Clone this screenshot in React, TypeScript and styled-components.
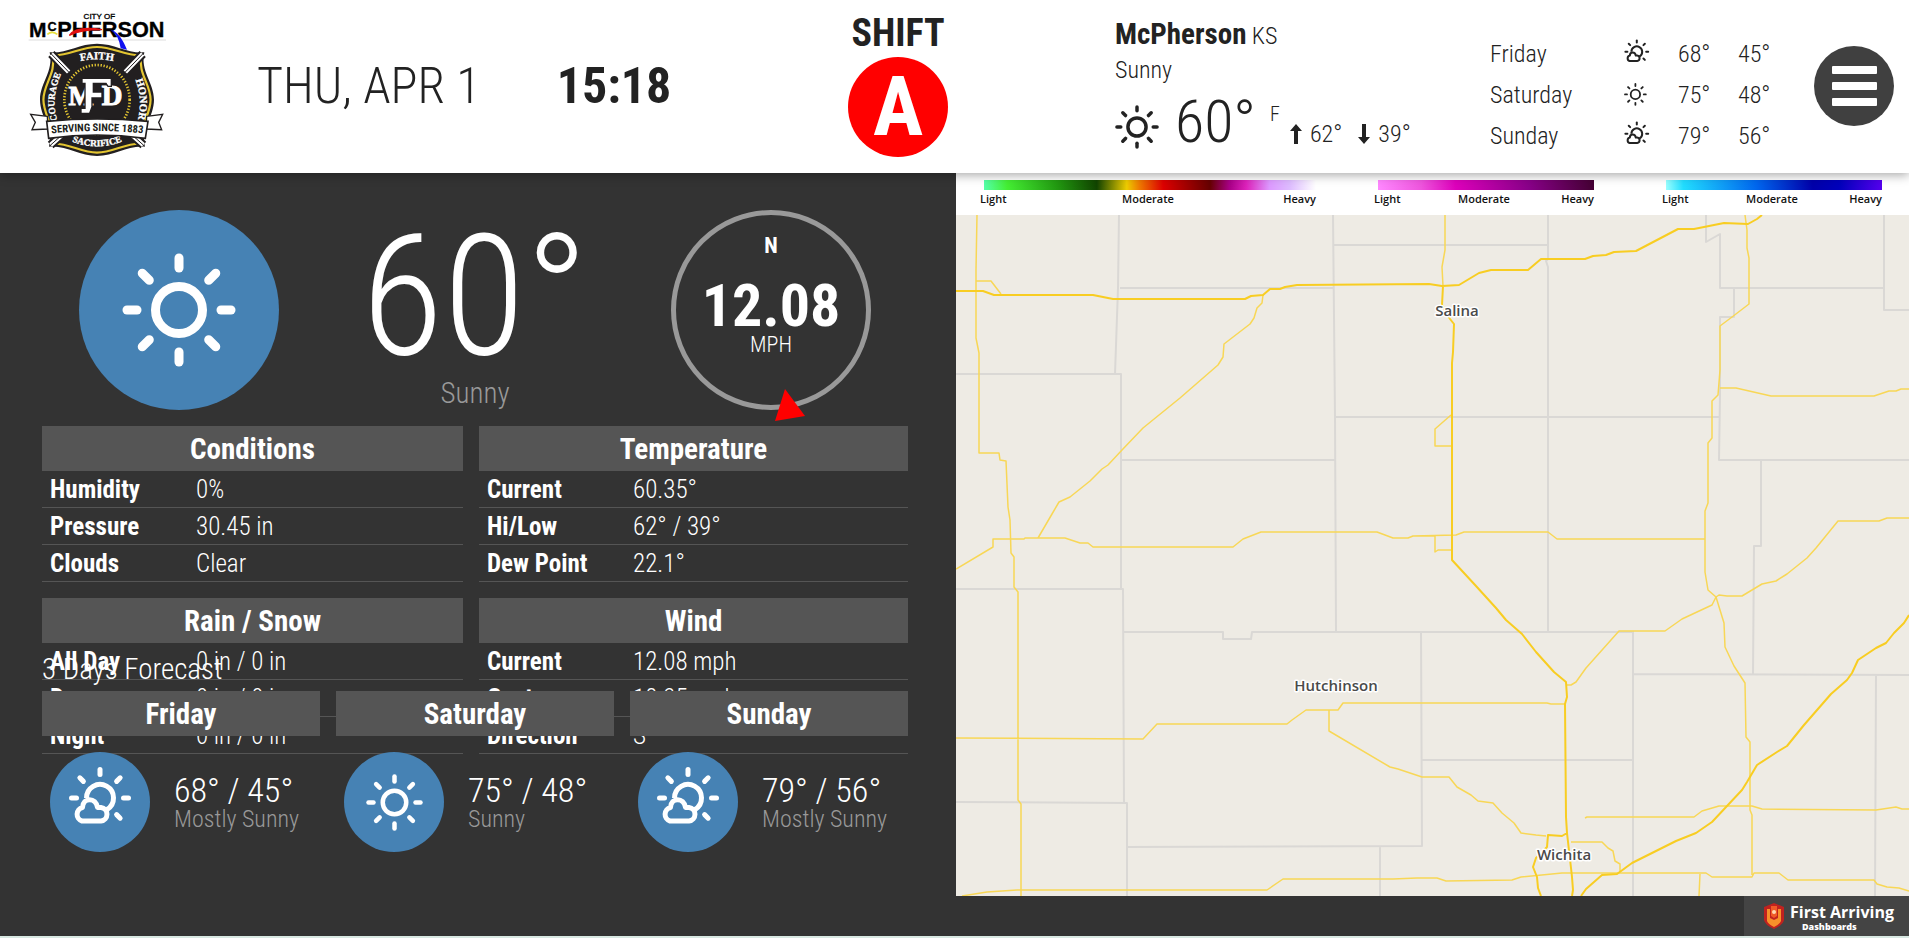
import styled, { createGlobalStyle, css } from 'styled-components'

const GlobalStyle = createGlobalStyle`
  * {
    box-sizing: border-box;
  }

  body {
    margin: 0;
    color: #222;
    background: #333;
    font-family: 'Roboto Condensed', Roboto, sans-serif;
    font-weight: 300;
  }

  b {
    font-weight: bold;
  }
`

const Page = styled.div`
  display: flex;
  flex-direction: column;
  min-height: 100vh;
  border-bottom: 2px solid #d8e8e2;
`

const Header = styled.header`
  position: relative;
  z-index: 2;
  display: grid;
  grid-template-columns: 229fr 541fr 200fr 492fr 324fr 95fr;
  height: 173px;
  padding-left: 28px;
  background: #fff;
  box-shadow: 0 2px 10px rgba(0, 0, 0, 0.35);
`

const LogoBox = styled.div`
  padding-top: 13px;
`

const DateTime = styled.div`
  display: flex;
  align-items: center;
  gap: 76px;
  padding-bottom: 2px;
  font-size: 50px;
  line-height: 60px;
  white-space: nowrap;
`

const Shift = styled.div`
  display: flex;
  flex-direction: column;
  align-items: center;
  padding-top: 13px;
  font-weight: bold;
`

const ShiftTitle = styled.div`
  font-size: 38px;
  line-height: 40px;
`

const ShiftBadge = styled.div`
  width: 100px;
  height: 100px;
  margin-top: 4px;
  border-radius: 50%;
  color: #fff;
  background: #f00;
  font-size: 84px;
  line-height: 100px;
  text-align: center;
`

const HeaderWeather = styled.section`
  padding: 16px 0 0 117px;
  font-size: 24px;
  line-height: 36px;
  white-space: nowrap;
`

const HeaderCity = styled.div`
  height: 36px;

  b {
    font-size: 29px;
  }
`

const HeaderNow = styled.div`
  display: flex;
  align-items: flex-start;
`

const HeaderNowIcon = styled.div`
  display: flex;
  width: 60px;
  padding-top: 17px;
`

const HeaderTemp = styled.div`
  font-size: 60px;
  line-height: 68px;
`

const Unit = styled.div`
  margin: 16px 10px 0 14px;
  font-size: 20px;
  line-height: 20px;
`

const HiLow = styled.div`
  display: flex;
  align-items: center;
  gap: 8px;
  padding: 30px 16px 0 0;
  line-height: 32px;
`

const DayTable = styled.table`
  height: 123px;
  margin-top: 33px;
  border-collapse: collapse;
  font-size: 24px;

  th,
  td {
    height: 41px;
    padding: 0;
    font-weight: 300;
    text-align: left;
  }

  th {
    width: 134px;
  }

  td {
    width: 60px;
  }

  td:nth-child(2) {
    width: 54px;
  }

  svg {
    display: block;
  }
`

const MenuButton = styled.button`
  display: flex;
  align-items: center;
  justify-content: center;
  width: 80px;
  height: 80px;
  margin-top: 46px;
  padding: 0;
  border: 0;
  border-radius: 50%;
  background: #404040;
  cursor: pointer;
`

const Main = styled.main`
  flex: 1;
  display: grid;
  grid-template-columns: 956fr 953fr;
`

const WeatherPanel = styled.section`
  position: relative;
  padding: 37px 48px 0 42px;
  color: #fff;
  background: #333;
`

const CurrentRow = styled.div`
  display: flex;
  justify-content: space-between;
  padding: 0 37px;
`

const Round = styled.div<{ $size: number }>`
  display: flex;
  flex: none;
  align-items: center;
  justify-content: center;
  width: ${(p) => p.$size}px;
  height: ${(p) => p.$size}px;
  border-radius: 50%;
  background: #4682b4;
`

const CurrentTemp = styled.div`
  height: 168px;
  font-size: 168px;
  line-height: 174px;
`

const CurrentText = styled.div`
  color: #999;
  font-size: 29px;
  line-height: 30px;
  text-align: center;
`

const Compass = styled.div`
  position: relative;
  width: 200px;
  height: 200px;
  padding-top: 19px;
  border: 5px solid #999;
  border-radius: 50%;
  font-size: 22px;
  line-height: 24px;
  text-align: center;
`

const Speed = styled.div`
  height: 57px;
  margin-top: 18px;
  font-size: 60px;
  font-weight: bold;
  line-height: 60px;
`

const Needle = styled.svg`
  position: absolute;
  left: 99px;
  top: 174px;
`

const TableGrid = styled.div`
  display: grid;
  grid-template-columns: 421fr 429fr;
  gap: 16px;
  margin-top: 16px;
`

const barStyle = css`
  height: 45px;
  background: #555;
  font-size: 29px;
  font-weight: bold;
  text-align: center;
`

const InfoTable = styled.table`
  width: 100%;
  table-layout: fixed;
  border-spacing: 0;
  font-size: 25px;

  col:first-child {
    width: 146px;
  }

  thead th {
    ${barStyle}
    padding: 0;
  }

  tbody th,
  tbody td {
    height: 37px;
    padding: 2px 8px 0;
    border-bottom: 1px solid #555;
    line-height: 30px;
    text-align: left;
  }
`

// sits on top of the tables when the window is short
const Forecast = styled.section`
  position: absolute;
  right: 48px;
  bottom: 84px;
  left: 42px;
`

const ForecastTitle = styled.h2`
  margin: 0;
  font-size: 29px;
  font-weight: 300;
  line-height: 44px;
`

const ForecastGrid = styled.div`
  display: grid;
  grid-template-columns: 1fr 1fr 1fr;
  gap: 16px;
`

const ForecastDay = styled.h3`
  ${barStyle}
  margin: 0 0 16px;
  line-height: 46px;
`

const ForecastBody = styled.div`
  display: flex;
  align-items: center;
  gap: 24px;
  padding-left: 8px;
  white-space: nowrap;
`

const ForecastTemp = styled.div`
  font-size: 34px;
  line-height: 34px;
`

const ForecastText = styled.div`
  color: #999;
  font-size: 24px;
  line-height: 24px;
`

const MapPanel = styled.section`
  display: flex;
  flex-direction: column;
  min-width: 0;
`

const Legend = styled.div`
  display: grid;
  grid-template-columns: 394fr 288fr 247fr;
  height: 42px;
  padding: 7px 0 0 24px;
  color: #111;
  background: #fff;
  font: 600 11px/16px 'Open Sans', sans-serif;
`

const Scale = styled.div<{ $gap: number }>`
  padding-right: ${(p) => p.$gap}px;
`

const ScaleBar = styled.div<{ $colors: string }>`
  height: 10px;
  margin-left: 4px;
  background: linear-gradient(90deg, ${(p) => p.$colors});
`

const ScaleText = styled.div`
  display: grid;
  grid-template-columns: 1fr auto 1fr;
  margin-top: 1px;

  span:last-child {
    text-align: right;
  }
`

const MapArea = styled.div`
  flex: 1;
  min-height: 681px;
  overflow: hidden;
  background: #eeebe4;

  svg {
    display: block;
    width: 100%;
    height: 100%;
  }
`

const MapText = styled.text`
  fill: #4a4a4a;
  stroke: #fff;
  stroke-width: 3px;
  stroke-linejoin: round;
  paint-order: stroke;
  font: 600 15px 'Open Sans', sans-serif;
  text-anchor: middle;
`

const Footer = styled.footer`
  display: flex;
  justify-content: flex-end;
  height: 40px;
  background: #333;
`

const Brand = styled.div`
  display: flex;
  align-items: center;
  gap: 5px;
  width: 165px;
  padding-left: 19px;
  color: #fff;
  background: #444;
  font-family: 'Open Sans', sans-serif;
  white-space: nowrap;
`

const BrandName = styled.div`
  font-size: 16px;
  font-weight: bold;
  line-height: 22px;
`

const BrandSub = styled.div`
  padding-left: 12px;
  font-size: 9px;
  font-weight: 800;
  line-height: 8px;
`

const days = [
  { name: 'Friday', high: 68, low: 45, text: 'Mostly Sunny' },
  { name: 'Saturday', high: 75, low: 48, text: 'Sunny' },
  { name: 'Sunday', high: 79, low: 56, text: 'Mostly Sunny' },
]

const tables = [
  { title: 'Conditions', rows: [['Humidity', '0%'], ['Pressure', '30.45 in'], ['Clouds', 'Clear']] },
  { title: 'Temperature', rows: [['Current', '60.35°'], ['Hi/Low', '62° / 39°'], ['Dew Point', '22.1°']] },
  { title: 'Rain / Snow', rows: [['All Day', '0 in / 0 in'], ['Day', '0 in / 0 in'], ['Night', '0 in / 0 in']] },
  { title: 'Wind', rows: [['Current', '12.08 mph'], ['Gust', '18.35 mph'], ['Direction', 'S']] },
]

const scales = [
  {
    gap: 58,
    colors:
      '#5fa 0%, #4e3 7%, #291 22%, #140 34%, #ec0 43%, #e70 47%, #d00 54%, #600 68%, #a08 74%, #d2b 79%, #d9f 86%, #dbf 92%, #fff 100%',
  },
  { gap: 68, colors: '#f8f 0%, #e5d 20%, #d0b 36%, #808 70%, #403 100%' },
  { gap: 27, colors: '#9ff 0%, #2df 8%, #06e 42%, #00a 68%, #00b 80%, #50e 100%' },
]

const counties = [
  'M163 0L162 73L159 159M164 73H377M377 0L379 202M378 30H592M0 159H165L165 374M379 202L380 416M379 202H763M165 245H379',
  'M592 0V44L590 46L592 52V416M750 0V27L764 19V73H928M928 0V95H953M778 73V102H764V180L763 245H953M805 245V331H798L797 459',
  'M0 374H167L168 588M0 587L171 588V681M168 417H267V424H295L296 417H677M465 417L466 631L171 632M465 545H677M424 632V681',
  'M677 416V681M677 459L953 460M920 460L919 681',
]

const roads = [
  'M21 0L20 55V123L23 138V238H43L44 245L50 246L52 292L54 305L55 338L58 342V372L62 377V585L65 589V681',
  'M20 66H35L45 79',
  'M307 80L306 88L301 93L298 103L294 109L268 129L267 142L262 150L224 183L187 213L166 235L152 250L146 254L134 266L114 282L103 287L96 299L82 323',
  'M0 354L37 332V324H68L69 323H109L124 328H132L137 332H277L287 324L305 317H421L437 323H452L457 321L500 320L508 317H592L601 324H749',
  'M489 0V35L486 52L487 71',
  'M495 200L479 214V231H496M479 321V337L482 335H496',
  'M789 0L791 15V33L793 43V89L776 102L764 111V155L762 180L756 186V223L752 228V288L749 296V357L752 375L760 382L768 408L769 432L778 451L789 468L790 522L794 527V595L796 600V660',
  'M764 173H780L815 181H918L933 176L940 176L945 174H953',
  'M611 470H615L620 467L630 453L663 416H709L726 404L756 390L760 382L763 380L771 381H786L806 369L820 366L831 359L851 343L860 333L882 306H923L931 303H953',
  'M0 523L187 524L201 509H331L336 505L350 495H382L387 488H591L595 489H609',
  'M373 495V516L434 552L442 554L466 562H493L501 572L515 580L522 586L537 588L546 598L558 608L565 618L580 620L590 621',
  'M615 627H646L652 633L657 636L659 646L664 649V657',
  'M629 603L631 602H738L746 596L763 591H796L806 594L920 595L940 592L946 594H953',
  'M6 681L31 677L61 675H311L327 664H437L461 663H481L490 666L556 665L565 662L606 658H750L756 662H796L798 658H823L832 665H918L921 669L931 672L943 673L953 676M744 659L743 681',
]

const highways = [
  'M0 76H27L38 80H137L157 84H289L295 81L307 80L314 74H324L329 72L341 70L473 69L486 71L503 70L523 58L535 55H572L585 44H629L637 41L650 40L658 37L680 36L722 14H738L768 8L792 9L801 4L806 0',
  'M487 71L486 90L494 104L498 109L497 137L496 148V345L520 371L540 393L550 405L566 419L580 437L598 457L610 467L611 482L609 489L610 602L611 618L615 653L616 662L617 675L616 681',
  'M953 400L948 408L938 418L930 428L920 433L902 445L896 458L891 465L875 479L848 510L831 531L821 537L801 550L791 567L786 575L756 607L740 618L720 626L698 637L676 648L661 659L646 660L630 674L625 681',
  'M611 618L606 621L592 620L591 632L580 643L577 652L581 662L582 673L585 681',
]

const SunIcon = ({ size }: { size: number }) => (
  <svg
    width={size}
    height={size}
    viewBox="-57 -57 114 114"
    fill="none"
    stroke="currentColor"
    strokeWidth="9"
    strokeLinecap="round"
  >
    <circle r="23.5" />
    {[0, 45, 90, 135, 180, 225, 270, 315].map((angle) => (
      <path key={angle} d="M0 -52V-42" transform={`rotate(${angle})`} />
    ))}
  </svg>
)

const CloudSunIcon = ({ size }: { size: number }) => (
  <svg
    width={size}
    height={(size * 72) / 64}
    viewBox="-32 -32 64 72"
    fill="none"
    stroke="currentColor"
    strokeWidth="5"
    strokeLinecap="round"
    strokeLinejoin="round"
  >
    <path d="M-13.5 0A13.5 13.5 0 1 1 7 11.5" strokeLinecap="butt" />
    <path d="M-18 23A7 7 0 0 1 -17.5 9.5C-17 -1 -4 -1 -2.5 9.5H1A6.8 6.8 0 0 1 1 23Z" />
    {[0, 45, 90, 135, 270, 315].map((angle) => (
      <path key={angle} d="M0 -28.5V-23.5" transform={`rotate(${angle})`} />
    ))}
  </svg>
)

const DayIcon = ({ text, scale }: { text: string; scale: number }) =>
  text === 'Sunny' ? <SunIcon size={57 * scale} /> : <CloudSunIcon size={64 * scale} />

const Arrow = ({ down }: { down?: boolean }) => (
  <svg width="12" height="20" viewBox="0 0 12 20" fill="currentColor">
    <path d="M6 0L12 7H8V20H4V7H0Z" transform={down ? 'rotate(180 6 10)' : undefined} />
  </svg>
)

const shield =
  'M101 158C150 162 190 132 243 132C296 132 336 162 385 158C372 215 414 250 414 300C414 350 374 390 387 441C336 436 296 469 243 469C190 469 150 436 99 441C112 390 72 350 72 300C72 250 114 215 101 158Z'

const Logo = () => (
  <svg width="138" height="145" viewBox="36 40 414 435" fontWeight="bold" textAnchor="middle">
    <g fontFamily="'Liberation Sans', sans-serif" fill="#000" stroke="#000">
      <text x="250" y="59" fontSize="24" fontWeight="normal">
        CITY OF
      </text>
      <text x="65" y="111" fontSize="63">
        M
      </text>
      <text x="108" y="94" fontSize="38">
        C
      </text>
      <text x="124" y="111" fontSize="65" textAnchor="start">
        PHERSON
      </text>
    </g>
    <path d="M38 121H452" stroke="#ccc" strokeWidth="2" />
    <path d="M94 104Q108 92 124 104" fill="none" stroke="#e8e03a" strokeWidth="5" />
    <path d="M160 107Q180 78 258 90Q190 90 160 107Z" fill="#e01010" stroke="#e01010" strokeWidth="4" />
    <path d={shield} fill="#221f20" />
    <path
      d={shield}
      fill="none"
      stroke="#e3c531"
      strokeWidth="7"
      transform="translate(243 300) scale(0.94) translate(-243 -300)"
    />
    <path d="M106 163L158 217M380 163L328 217M104 436L150 395M382 436L336 395" stroke="#221f20" strokeWidth="26" />
    <path d="M106 163L158 217M380 163L328 217M104 436L150 395M382 436L336 395" stroke="#fff" strokeWidth="14" />
    <path d="M106 163L158 217M380 163L328 217M104 436L150 395M382 436L336 395" stroke="#221f20" strokeWidth="3" />
    <ellipse cx="243" cy="302" rx="108" ry="113" fill="#221f20" />
    <ellipse cx="243" cy="300" rx="98" ry="104" fill="none" stroke="#e3c531" strokeWidth="8" strokeDasharray="4 5" />
    <path d="M284 91Q310 95 333 150L314 146Q308 105 284 91Z" fill="#1010f0" />
    <path id="logoFaith" d="M160 194Q243 164 326 194" fill="none" />
    <path id="logoCourage" d="M128 374Q98 300 140 212" fill="none" />
    <path id="logoHonor" d="M350 222Q388 300 360 378" fill="none" />
    <path id="logoSacrifice" d="M160 422Q243 458 326 422" fill="none" />
    <g fill="#fff" stroke="#fff" fontFamily="'Liberation Serif', serif" fontSize="32">
      <text>
        <textPath href="#logoFaith" startOffset="50%">
          FAITH
        </textPath>
      </text>
      <text fontSize="28">
        <textPath href="#logoCourage" startOffset="50%">
          COURAGE
        </textPath>
      </text>
      <text>
        <textPath href="#logoHonor" startOffset="50%">
          HONOR
        </textPath>
      </text>
      <text fontSize="28">
        <textPath href="#logoSacrifice" startOffset="50%">
          SACRIFICE
        </textPath>
      </text>
    </g>
    <g fill="#fff" stroke="#fff" strokeWidth="3" fontFamily="'Liberation Serif', serif">
      <text x="195" y="315" fontSize="80">
        M
      </text>
      <text x="288" y="315" fontSize="86">
        D
      </text>
    </g>
    <path
      d="M198 236H286V260H276L270 251H232V277H258V295H228V322L221 341H195V326H207V251H198Z"
      fill="#fff"
      stroke="#221f20"
      strokeWidth="4"
    />
    <path
      d="M94 350L44 344L58 368L48 390L96 388ZM392 350L440 344L428 368L437 390L390 388Z"
      fill="#fff"
      stroke="#221f20"
      strokeWidth="4"
    />
    <path d="M92 365Q243 350 396 365L388 416Q243 396 98 416Z" fill="#fff" stroke="#221f20" strokeWidth="5" />
    <path id="logoRibbon" d="M100 402Q243 386 388 402" fill="none" />
    <text fill="#221f20" fontFamily="'Roboto Condensed', Roboto, sans-serif" fontSize="32">
      <textPath href="#logoRibbon" startOffset="50%">
        SERVING SINCE 1883
      </textPath>
    </text>
  </svg>
)

const BrandShield = () => (
  <svg width="22" height="26" viewBox="0 0 22 26">
    <path d="M11 0L21 4V17Q20 22 11 26Q2 22 1 17V4Z" fill="#c0221f" />
    <path d="M4 6H7V15L11 17L15 15V6H18V18Q17 21 11 24Q5 21 4 18Z" fill="#f7902a" />
    <path d="M8 3H14V13L11 15L8 13Z" fill="#f05a28" />
    <circle cx="11" cy="9" r="2" fill="#ffd9b0" />
  </svg>
)

function App() {
  return (
    <Page>
      <GlobalStyle />
      <Header>
        <LogoBox>
          <Logo />
        </LogoBox>
        <DateTime>
          <span>THU, APR 1</span>
          <b>15:18</b>
        </DateTime>
        <Shift>
          <ShiftTitle>SHIFT</ShiftTitle>
          <ShiftBadge>A</ShiftBadge>
        </Shift>
        <HeaderWeather>
          <HeaderCity>
            <b>McPherson</b> KS
          </HeaderCity>
          <div>Sunny</div>
          <HeaderNow>
            <HeaderNowIcon>
              <SunIcon size={44} />
            </HeaderNowIcon>
            <HeaderTemp>60°</HeaderTemp>
            <Unit>F</Unit>
            <HiLow>
              <Arrow /> 62°
            </HiLow>
            <HiLow>
              <Arrow down /> 39°
            </HiLow>
          </HeaderNow>
        </HeaderWeather>
        <div>
          <DayTable>
            <tbody>
              {days.map((day) => (
                <tr key={day.name}>
                  <th scope="row">{day.name}</th>
                  <td>
                    <DayIcon text={day.text} scale={0.4} />
                  </td>
                  <td>{day.high}°</td>
                  <td>{day.low}°</td>
                </tr>
              ))}
            </tbody>
          </DayTable>
        </div>
        <MenuButton aria-label="Menu">
          <svg width="45" height="40" viewBox="0 0 45 40" fill="#fff">
            <rect width="45" height="8" rx="1" />
            <rect y="16" width="45" height="8" rx="1" />
            <rect y="32" width="45" height="8" rx="1" />
          </svg>
        </MenuButton>
      </Header>
      <Main>
        <WeatherPanel>
          <CurrentRow>
            <Round $size={200}>
              <SunIcon size={114} />
            </Round>
            <div>
              <CurrentTemp>60°</CurrentTemp>
              <CurrentText>Sunny</CurrentText>
            </div>
            <Compass>
              <b>N</b>
              <Speed>12.08</Speed>
              MPH
              <Needle width="32" height="34" viewBox="0 0 32 34">
                <path d="M10 0L30 27L0 32Z" fill="#f00" />
              </Needle>
            </Compass>
          </CurrentRow>
          <TableGrid>
            {tables.map((table) => (
              <InfoTable key={table.title}>
                <colgroup>
                  <col />
                  <col />
                </colgroup>
                <thead>
                  <tr>
                    <th colSpan={2}>{table.title}</th>
                  </tr>
                </thead>
                <tbody>
                  {table.rows.map(([label, value]) => (
                    <tr key={label}>
                      <th scope="row">{label}</th>
                      <td>{value}</td>
                    </tr>
                  ))}
                </tbody>
              </InfoTable>
            ))}
          </TableGrid>
          <Forecast>
            <ForecastTitle>3 Days Forecast</ForecastTitle>
            <ForecastGrid>
              {days.map((day) => (
                <div key={day.name}>
                  <ForecastDay>{day.name}</ForecastDay>
                  <ForecastBody>
                    <Round $size={100}>
                      <DayIcon text={day.text} scale={1} />
                    </Round>
                    <div>
                      <ForecastTemp>
                        {day.high}° / {day.low}°
                      </ForecastTemp>
                      <ForecastText>{day.text}</ForecastText>
                    </div>
                  </ForecastBody>
                </div>
              ))}
            </ForecastGrid>
          </Forecast>
        </WeatherPanel>
        <MapPanel>
          <Legend>
            {scales.map((scale) => (
              <Scale key={scale.gap} $gap={scale.gap}>
                <ScaleBar $colors={scale.colors} />
                <ScaleText>
                  <span>Light</span>
                  <span>Moderate</span>
                  <span>Heavy</span>
                </ScaleText>
              </Scale>
            ))}
          </Legend>
          <MapArea>
            <svg viewBox="0 0 953 681" preserveAspectRatio="xMidYMid slice" fill="none" strokeLinejoin="round">
              <path d={counties.join('')} stroke="#dad8d5" strokeWidth="2" />
              <path d={roads.join('')} stroke="#f8d756" strokeWidth="1.5" />
              <path d={highways.join('')} stroke="#f8cd22" strokeWidth="2" />
              <MapText x="501" y="101">
                Salina
              </MapText>
              <MapText x="380" y="476">
                Hutchinson
              </MapText>
              <MapText x="608" y="645">
                Wichita
              </MapText>
            </svg>
          </MapArea>
          <Footer>
            <Brand>
              <BrandShield />
              <div>
                <BrandName>First Arriving</BrandName>
                <BrandSub>Dashboards</BrandSub>
              </div>
            </Brand>
          </Footer>
        </MapPanel>
      </Main>
    </Page>
  )
}

export default App
